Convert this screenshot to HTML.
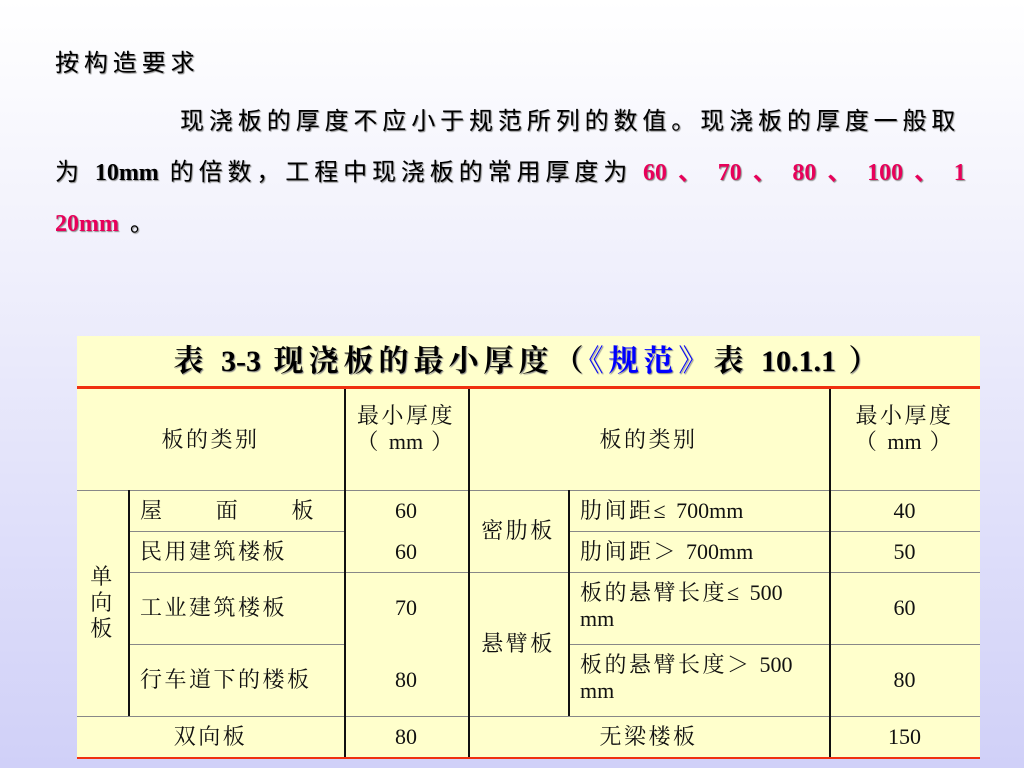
<!DOCTYPE html>
<html><head><meta charset="utf-8"><style>
body{margin:0;width:1024px;height:768px;overflow:hidden;background:linear-gradient(#fff 0%,#f2f2fc 30%,#d0d0f8 100%);font-family:"Liberation Serif","Noto Serif CJK SC",serif;position:relative}
.t{position:absolute;font-size:24px;color:#000;text-shadow:1px 1px 1px #888;white-space:nowrap;font-family:"Liberation Serif","Noto Sans CJK SC",sans-serif;letter-spacing:4.9px}
.n{letter-spacing:0 !important}
.r{color:#e8005a;font-weight:bold}
#tb{position:absolute;left:77px;top:336px;width:903px;height:421px;background:#ffffcc;border-bottom:2px solid #f03010}
.title{position:absolute;left:0;top:0;width:903px;height:50px;border-bottom:3px solid #f03010;text-align:center;font-size:30px;font-weight:bold;line-height:52px;text-shadow:1px 1px 1px #888;letter-spacing:5px}
.b{color:#0000ff}
.c{position:absolute;display:flex;align-items:center;justify-content:center;text-align:center;font-size:22px;line-height:26px;color:#111;box-sizing:border-box;letter-spacing:2.5px;white-space:nowrap}
.h{position:absolute;height:1px;background:#888}
.v{position:absolute;width:1.5px;background:#111}
</style></head><body>
<div class="t" style="left:55px;top:43px">按构造要求</div>
<div class="t" style="left:180px;top:101px">现浇板的厚度不应小于规范所列的数值。现浇板的厚度一般取</div>
<div class="t" style="left:55px;top:152px">为 <b class="n">10mm</b> 的倍数，工程中现浇板的常用厚度为 <span class="r"><span class="n">60</span> 、 <span class="n">70</span> 、 <span class="n">80</span> 、 <span class="n">100</span> 、 1</span></div>
<div class="t" style="left:55px;top:203px"><span class="r n">20mm</span> 。</div>
<div id="tb">
<div class="title">表 <span class="n">3-3</span> 现浇板的最小厚度（<span class="b">《规范》</span>表 <span class="n">10.1.1</span> ）</div>
<div class="h" style="left:0;top:154px;width:903px"></div>
<div class="h" style="left:51px;top:195px;width:216px"></div>
<div class="h" style="left:491px;top:195px;width:412px"></div>
<div class="h" style="left:51px;top:236px;width:852px"></div>
<div class="h" style="left:51px;top:308px;width:216px"></div>
<div class="h" style="left:491px;top:308px;width:412px"></div>
<div class="h" style="left:0;top:380px;width:903px"></div>
<div class="v" style="left:51px;top:154px;height:226px"></div>
<div class="v" style="left:267px;top:53px;height:368px"></div>
<div class="v" style="left:391px;top:53px;height:368px"></div>
<div class="v" style="left:491px;top:154px;height:226px"></div>
<div class="v" style="left:752px;top:53px;height:368px"></div>
<div class="c" style="left:0;top:53px;width:267px;height:101px"><div>板的类别</div></div>
<div class="c" style="left:267px;top:53px;width:124px;height:80px"><div>最小厚度<br>（ <span class="n">mm</span> ）</div></div>
<div class="c" style="left:391px;top:53px;width:361px;height:101px"><div>板的类别</div></div>
<div class="c" style="left:752px;top:53px;width:151px;height:80px"><div>最小厚度<br>（ <span class="n">mm</span> ）</div></div>
<div class="c" style="left:0;top:154px;width:51px;height:226px"><div>单<br>向<br>板</div></div>
<div class="c" style="left:51px;top:154px;width:216px;height:41px;justify-content:space-between;padding:0 28px 0 12px"><span>屋</span><span>面</span><span>板</span></div>
<div class="c" style="left:51px;top:195px;width:216px;height:41px;justify-content:flex-start;padding-left:12px"><div>民用建筑楼板</div></div>
<div class="c" style="left:51px;top:236px;width:216px;height:72px;justify-content:flex-start;padding-left:12px"><div>工业建筑楼板</div></div>
<div class="c" style="left:51px;top:308px;width:216px;height:72px;justify-content:flex-start;padding-left:12px"><div>行车道下的楼板</div></div>
<div class="c n" style="left:267px;top:154px;width:124px;height:41px"><div>60</div></div>
<div class="c n" style="left:267px;top:195px;width:124px;height:41px"><div>60</div></div>
<div class="c n" style="left:267px;top:236px;width:124px;height:72px"><div>70</div></div>
<div class="c n" style="left:267px;top:308px;width:124px;height:72px"><div>80</div></div>
<div class="c" style="left:391px;top:154px;width:100px;height:82px"><div>密肋板</div></div>
<div class="c" style="left:391px;top:236px;width:100px;height:144px"><div>悬臂板</div></div>
<div class="c" style="left:491px;top:154px;width:261px;height:41px;justify-content:flex-start;padding-left:12px"><div>肋间距≤ <span class="n">700mm</span></div></div>
<div class="c" style="left:491px;top:195px;width:261px;height:41px;justify-content:flex-start;padding-left:12px"><div>肋间距＞ <span class="n">700mm</span></div></div>
<div class="c" style="left:491px;top:236px;width:261px;height:72px;justify-content:flex-start;padding-left:12px;text-align:left;align-items:flex-start;padding-top:8px"><div>板的悬臂长度≤ <span class="n">500</span><br><span class="n">mm</span></div></div>
<div class="c" style="left:491px;top:308px;width:261px;height:72px;justify-content:flex-start;padding-left:12px;text-align:left;align-items:flex-start;padding-top:8px"><div>板的悬臂长度＞ <span class="n">500</span><br><span class="n">mm</span></div></div>
<div class="c n" style="left:752px;top:154px;width:151px;height:41px"><div>40</div></div>
<div class="c n" style="left:752px;top:195px;width:151px;height:41px"><div>50</div></div>
<div class="c n" style="left:752px;top:236px;width:151px;height:72px"><div>60</div></div>
<div class="c n" style="left:752px;top:308px;width:151px;height:72px"><div>80</div></div>
<div class="c" style="left:0;top:380px;width:267px;height:41px"><div>双向板</div></div>
<div class="c n" style="left:267px;top:380px;width:124px;height:41px"><div>80</div></div>
<div class="c" style="left:391px;top:380px;width:361px;height:41px"><div>无梁楼板</div></div>
<div class="c n" style="left:752px;top:380px;width:151px;height:41px"><div>150</div></div>
</div>
</body></html>
